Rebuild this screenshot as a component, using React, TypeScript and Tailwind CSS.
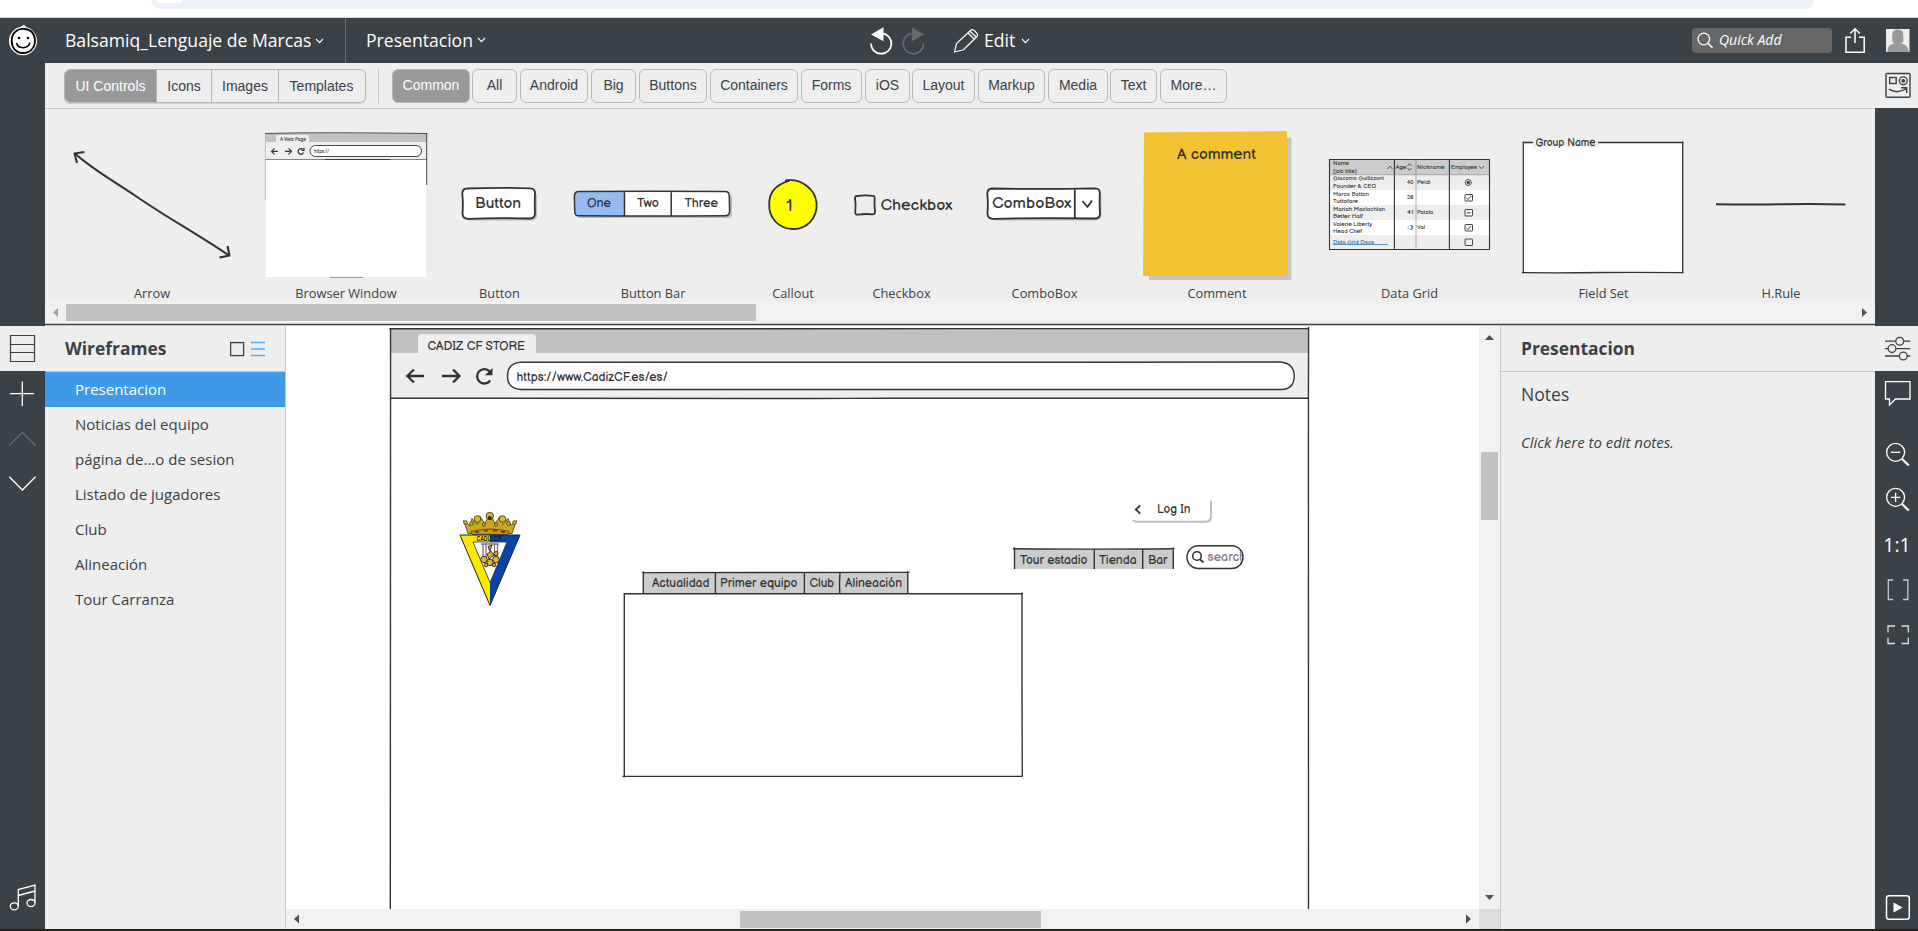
import React from "react";

const INK = "#333333";

function Icon({ box, className = "", children, sw = 1.3 }: { box: string; className?: string; children: React.ReactNode; sw?: number }) {
  const [, , w, h] = box.split(" ").map(Number);
  return (
    <svg width={w} height={h} viewBox={box} fill="none" stroke="currentColor" strokeWidth={sw} className={`block shrink-0 ${className}`}>
      {children}
    </svg>
  );
}

function Label({ x, y, w, size, children, fill = INK }: { x: number; y: number; w: number; size: number; children: string; fill?: string }) {
  return (
    <text x={x} y={y} fontSize={size} textLength={w} lengthAdjust="spacingAndGlyphs" fill={fill} stroke="none" fontFamily="'Balsamiq Sans', Inter, sans-serif">
      {children}
    </text>
  );
}

function Chevron({ className = "" }: { className?: string }) {
  return (
    <svg width="9" height="6" viewBox="0 0 9 6" fill="none" stroke="currentColor" strokeWidth="1.1" className={`block ${className}`}>
      <path d="M1 1 L4.5 4.6 L8 1" />
    </svg>
  );
}

/* ---------- top bar ---------- */

function TopBar() {
  return (
    <header className="flex h-[45px] shrink-0 items-center bg-[#3a4147] text-[17.6px] text-white">
      <Icon box="0 18 45 45" className="w-[45px]">
        <ellipse cx="23" cy="41" rx="14" ry="14.3" fill="#fff" stroke="none" />
        <path d="M21 27 l3 -1.5 l2 2" stroke="#fff" />
        <path d="M26 29.4 C18 27 11.600 33 11.700 41 C11.800 48 16 53 23 53 C30 53 35 48 35 40.500 C35 34 31 29 24 29" stroke="#000" strokeWidth="1.800" />
        <circle cx="19" cy="38" r="1.300" fill="#000" stroke="none" />
        <circle cx="28" cy="38" r="1.300" fill="#000" stroke="none" />
        <path d="M16.500 43 C18 49 28 49.500 30 42.500" stroke="#000" strokeWidth="1.500" />
      </Icon>
      <div className="flex h-full w-[301px] items-center border-r border-[#6b6f73] pl-5">
        <span className="w-[244px] whitespace-nowrap">Balsamiq_Lenguaje de Marcas</span>
        <Chevron className="ml-[6px]" />
      </div>
      <div className="flex w-[524px] items-center pl-[20px]">
        <span className="w-[105px]">Presentacion</span>
        <Chevron className="ml-[6px]" />
      </div>
      <Icon box="870 18 60 45" sw={1.8}>
        <path d="M871 43.500 A10.200 10.200 0 1 0 883 33.500" />
        <path d="M871 34.500 L883.500 27.200 V41.200 Z" fill="currentColor" stroke="none" />
        <g className="text-[#666a6d]" stroke="currentColor">
          <path d="M923.500 43.500 A10.200 10.200 0 1 1 911.500 33.500" />
          <path d="M924 34.500 L911.800 27.200 V41.200 Z" fill="currentColor" stroke="none" />
        </g>
      </Icon>
      <Icon box="930 18 55 45" sw={1.2}>
        <path d="M954.600 52 L956.500 43.500 L970.500 30.500 Q972 29 974 30.200 L977 33.500 Q978.300 35 977 36.500 L963.500 49.800 Z M968 33 L974.500 39.200 M970 31.200 L976.500 37.200" />
      </Icon>
      <span className="-ml-px w-[32px]">Edit</span>
      <Chevron className="ml-[5px]" />
      <div className="ml-auto flex h-[25px] w-[140px] items-center rounded-[4px] bg-[#666666] pl-[4px]">
        <Icon box="1696 28 23 25">
          <circle cx="1703.800" cy="39" r="5.800" />
          <path d="M1708 43.300 L1712.500 47.800" strokeWidth="1.600" />
        </Icon>
        <span className="-mt-[2px] text-[14px] italic">Quick Add</span>
      </div>
      <Icon box="1832 18 43 45" sw={1.5}>
        <path d="M1851 37.200 H1846 V52.300 H1864.200 V37.200 H1859 M1855 43 V29 M1850.300 33.500 L1855 28.800 L1859.700 33.500" />
      </Icon>
      <Icon box="1875 18 43 45">
        <rect x="1886" y="29" width="23.500" height="23" fill="#eeeeee" stroke="none" />
        <path d="M1887.500 52 C1887.500 46 1890 44.500 1895.500 43 C1892 43 1892 41.500 1892.300 38 C1892 32 1893 29.500 1897.700 29.500 C1903 29.500 1903.500 33 1903.300 38 C1903.800 41.500 1903.500 43 1900 43 C1905.500 44.500 1908.500 46 1908.500 52 Z" fill="#999" stroke="none" />
      </Icon>
    </header>
  );
}

/* ---------- control library ---------- */

const CATEGORIES: [string, string][] = [
  ["Common", "w-[78px] mr-[2px] bg-[#999999] text-white"],
  ["All", "w-[45px] mr-[3px]"],
  ["Android", "w-[68px] mr-[3px]"],
  ["Big", "w-[45px] mr-[3px]"],
  ["Buttons", "w-[68px] mr-[3px]"],
  ["Containers", "w-[88px] mr-[3px]"],
  ["Forms", "w-[61px] mr-[3px]"],
  ["iOS", "w-[45px] mr-[2px]"],
  ["Layout", "w-[63px] mr-[3px]"],
  ["Markup", "w-[67px] mr-[3px]"],
  ["Media", "w-[60px] mr-[2px]"],
  ["Text", "w-[47px] mr-[3px]"],
  ["More…", "w-[67px]"],
];

function LibraryBar() {
  return (
    <div className="flex h-[46px] items-start border-b border-[#c6c6c6] pl-[19px] pt-[6px] font-['Liberation_Sans',Arial,sans-serif] text-[14px] text-[#3a4147]">
      <div className="flex h-[34px] w-[302px] overflow-hidden rounded-[6px] border border-[#b5b5b5] text-center leading-[32px] shadow-[0_1px_1px_#d0d0d0]">
        <span className="w-[91px] bg-[#999999] text-white">UI Controls</span>
        <span className="w-[55px] border-l border-[#b5b5b5]">Icons</span>
        <span className="w-[67px] border-l border-[#b5b5b5]">Images</span>
        <span className="grow border-l border-[#b5b5b5] pr-px">Templates</span>
      </div>
      <div className="ml-[12px] mr-[13px] h-[34px] w-px bg-[#c6c6c6]" />
      {CATEGORIES.map(([name, cls]) => (
        <span key={name} className={`h-[34px] shrink-0 rounded-[6px] border border-[#b8b8b8] text-center leading-[31px] ${cls}`}>
          {name}
        </span>
      ))}
    </div>
  );
}

function Thumb({ box, children }: { box: string; children: React.ReactNode }) {
  const [, , w, h] = box.split(" ").map(Number);
  return (
    <svg width={w} height={h} viewBox={box} fill="none" stroke={INK} strokeWidth="1.800" strokeLinejoin="round" className="block">
      {children}
    </svg>
  );
}

const ROWS: { y: number; a: string; b: string; aw: number; bw: number; age: string; nick: string }[] = [
  { y: 174.5, a: "Giacomo Guilizzoni", b: "Founder & CEO", aw: 51, bw: 43, age: "40", nick: "Peldi" },
  { y: 190, a: "Marco Botton", b: "Tuttofare", aw: 36, bw: 25, age: "38", nick: "" },
  { y: 205, a: "Mariah Maclachlan", b: "Better Half", aw: 52, bw: 30, age: "41", nick: "Patata" },
  { y: 220, a: "Valerie Liberty", b: "Head Chef", aw: 39, bw: 29, age: ":)", nick: "Val" },
];

const CONTROLS: { name: string; width: string; art: React.ReactNode }[] = [
  {
    name: "Arrow",
    width: "w-[214px]",
    art: (
      <Thumb box="45 109 214 173">
        <path d="M75 153.500 C92 169 112 180 135 195.500 C165 216.500 196 233 229 255.500" strokeWidth="2.100" />
        <path d="M84.500 152 L74.500 153.500 L77 163 M227.500 246 L229.500 255.500 L219.500 257.500" strokeWidth="2.100" />
      </Thumb>
    ),
  },
  {
    name: "Browser Window",
    width: "w-[174px]",
    art: (
      <Thumb box="259 109 174 173">
        <rect x="265.500" y="133" width="161.500" height="144" fill="#fff" stroke="none" />
        <rect x="265.500" y="133" width="161.500" height="9.500" fill="#c1c1c1" stroke="none" />
        <path d="M265.500 142.300 H427 V159 H265.500 Z M276 143 V137 Q276 135 278 135 H307 Q309 135 309 137 V143 Z" fill="#eee" stroke="none" />
        <path d="M265 133.500 Q300 132.500 340 132.700 T427.500 133.500" strokeWidth="0.800" />
        <path d="M265.500 159.500 H427" strokeWidth="0.600" />
        <path d="M325 159.500 H390 M426.700 134 V185" strokeWidth="0.900" />
        <path d="M330 277.400 H363" strokeWidth="0.500" />
        <path d="M265.400 134 V200" stroke="#aaa" strokeWidth="0.700" />
        <path d="M265.400 200 V277 M427 185 V277" stroke="#ddd" strokeWidth="0.600" />
        <rect x="310" y="145.500" width="111.500" height="11" rx="5.500" fill="#fff" strokeWidth="0.900" />
        <path d="M278 151.300 H271.500 M274.500 148.300 L271.500 151.300 L274.500 154.300 M285 151.300 H291.500 M288.500 148.300 L291.500 151.300 L288.500 154.300" strokeWidth="1.200" />
        <path d="M303 149.500 A2.800 2.800 0 1 0 303.500 152.500 M304 147.800 V150.500 H301.500" strokeWidth="1.200" />
        <Label x={280} y={141.300} w={26} size={5.500}>A Web Page</Label>
        <Label x={314} y={153.300} w={15} size={5.500}>https://</Label>
      </Thumb>
    ),
  },
  {
    name: "Button",
    width: "w-[133px]",
    art: (
      <Thumb box="433 109 133 173">
        <rect x="465" y="191.500" width="72" height="29" rx="5" fill="#bbb" stroke="none" />
        <path d="M467 188.500 Q500 187.500 530 188.300 Q535 188.500 535 193 Q534.500 204 535 213 Q535 218.500 530 218.500 Q500 217.500 468 218.800 Q462.500 218.800 462.500 213 Q463.300 203 462.300 194 Q462.300 188.500 467 188.500 Z" fill="#fff" />
        <Label x={475} y={207.500} w={46} size={15}>Button</Label>
      </Thumb>
    ),
  },
  {
    name: "Button Bar",
    width: "w-[174px]",
    art: (
      <Thumb box="566 109 174 173">
        <rect x="577" y="194.500" width="155" height="23.500" rx="4" fill="#bbb" stroke="none" />
        <rect x="574.500" y="191.500" width="155" height="24.500" rx="5" fill="#fff" stroke="none" />
        <path d="M624.500 191.500 H579 Q574.500 191.500 574.500 196 V211 Q574.500 216 579 216 H624.500 Z" fill="#94bbf2" stroke="none" />
        <path d="M579 191.500 Q650 190.800 725 191.500 Q729.500 191.500 729.300 196 L729.600 211 Q729.500 215.800 725 215.800 Q650 216.400 579 215.800 Q574.500 216 574.700 211 L574.400 196 Q574.500 191.500 579 191.500 Z M624.500 191.500 V216 M671.200 191.500 V216" strokeWidth="1.500" />
        <Label x={587} y={207} w={24} size={12}>One</Label>
        <Label x={637} y={207} w={22} size={12}>Two</Label>
        <Label x={684.500} y={207} w={33.500} size={12}>Three</Label>
      </Thumb>
    ),
  },
  {
    name: "Callout",
    width: "w-[106px]",
    art: (
      <Thumb box="740 109 106 173">
        <path d="M786 180.500 C800 178 815 188 816.600 203 C817.500 219 806 229.500 793 229 C779 229 768.500 218 769.200 204 C769 191 778 184 789 180.800" fill="#ffff00" />
        <path d="M785 181.200 L789 180.500" strokeWidth="2.200" />
        <Label x={786} y={211} w={6.500} size={16}>1</Label>
      </Thumb>
    ),
  },
  {
    name: "Checkbox",
    width: "w-[111px]",
    art: (
      <Thumb box="846 109 111 173">
        <path d="M857 196 Q865 195 873 195.800 Q875 196 874.600 199 Q874.200 205 875 212 Q875 214.500 872 214.300 Q865 213.500 858 214.700 Q855 214.700 855.300 212 Q856 204 855 198 Q855 196 857 196 Z" />
        <Label x={880.500} y={210} w={72} size={15}>Checkbox</Label>
      </Thumb>
    ),
  },
  {
    name: "ComboBox",
    width: "w-[175px]",
    art: (
      <Thumb box="957 109 175 173">
        <rect x="990" y="191.500" width="111.500" height="29" rx="5" fill="#bbb" stroke="none" />
        <path d="M992 188.500 Q1045 189.500 1095 188.300 Q1100 188.500 1099.800 193 Q1099.300 204 1100 213 Q1100 218.500 1095 218.500 Q1045 217.500 993 218.800 Q987.500 218.800 987.500 213 Q988.300 203 987.300 194 Q987.300 188.500 992 188.500 Z M1074.800 189 V218.500" fill="#fff" />
        <path d="M1082.500 201 L1087.500 207 L1092 200.500" />
        <Label x={992} y={207.500} w={79.500} size={15}>ComboBox</Label>
      </Thumb>
    ),
  },
  {
    name: "Comment",
    width: "w-[170px]",
    art: (
      <Thumb box="1132 109 170 173">
        <rect x="1149" y="137.500" width="142.500" height="142.500" fill="#c4c4c4" stroke="none" />
        <path d="M1144 132.500 L1287 131 L1287.200 276 L1143 276 Z" fill="#f1c232" stroke="none" />
        <Label x={1177} y={158.700} w={79} size={14.500}>A comment</Label>
      </Thumb>
    ),
  },
  {
    name: "Data Grid",
    width: "w-[215px]",
    art: (
      <Thumb box="1302 109 215 173">
        <rect x="1329.500" y="159.500" width="160" height="90" fill="#fff" stroke="none" />
        <path d="M1329.500 159.500 H1489.500 V174.500 H1329.500 Z" fill="#ccc" stroke="none" />
        <path d="M1329.500 175 H1489.500 V190 H1329.500 Z M1329.500 205 H1489.500 V220 H1329.500 Z M1329.500 235 H1489.500 V249.500 H1329.500 Z" fill="#eee" stroke="none" />
        <path d="M1329.500 159.500 H1489.500 V249.500 H1329.500 Z M1394.400 159.500 V249.500 M1449.400 159.500 V249.500" strokeWidth="1.100" />
        <path d="M1416 159.500 V249.500 M1329.500 174.700 H1489.500" stroke="#777" strokeWidth="0.600" />
        <path d="M1387.500 169 L1390 166 L1392.500 169 M1479 166 L1481.500 168.800 L1484 166 M1407.500 166 L1409.500 163.500 L1411.500 166 M1407.500 168 L1409.500 170.500 L1411.500 168" strokeWidth="0.800" />
        <Label x={1333} y={165} w={16} size={5.800}>Name</Label>
        <Label x={1333} y={172.500} w={24} size={5.800}>(job title)</Label>
        <Label x={1395.500} y={169} w={11} size={5.800}>Age</Label>
        <Label x={1417} y={169} w={27.500} size={5.800}>Nickname</Label>
        <Label x={1451} y={169} w={26} size={5.800}>Employee</Label>
        {ROWS.map((r) => (
          <g key={r.a}>
            <Label x={1333} y={r.y + 5.500} w={r.aw} size={5.800}>{r.a}</Label>
            <Label x={1333} y={r.y + 13} w={r.bw} size={5.800}>{r.b}</Label>
            <Label x={1407} y={r.y + 9} w={6.500} size={5.800}>{r.age}</Label>
            {r.nick && <Label x={1417} y={r.y + 9} w={r.nick.length * 2.700} size={5.800}>{r.nick}</Label>}
          </g>
        ))}
        <Label x={1333} y={243.500} w={41} size={5.800} fill="#1a6aae">Data Grid Docs</Label>
        <path d="M1333 244.500 H1388" stroke="#1a6aae" strokeWidth="0.700" />
        <g strokeWidth="0.900">
          <circle cx="1468.300" cy="182.500" r="3" />
          <circle cx="1468.300" cy="182.500" r="1.200" fill={INK} />
          <rect x="1465" y="194.500" width="7.500" height="6.500" rx="0.500" />
          <rect x="1465" y="209.500" width="7.500" height="6.500" rx="0.500" />
          <rect x="1465" y="224.500" width="7.500" height="6.500" rx="0.500" />
          <rect x="1465" y="239" width="7.500" height="6.500" rx="0.500" />
          <path d="M1466.500 198 L1468 199.500 L1471 196 M1467 212.800 H1470.500 M1466.500 228 L1468 229.500 L1471 226" />
        </g>
      </Thumb>
    ),
  },
  {
    name: "Field Set",
    width: "w-[173px]",
    art: (
      <Thumb box="1517 109 173 173">
        <rect x="1523.500" y="142.500" width="159.500" height="130" fill="#fff" stroke="none" />
        <path d="M1523.500 142.500 H1683.500 M1523.300 141.500 V273.500 M1682.700 141.500 V273.500 M1522 272.600 Q1560 273 1600 272.500 T1683.500 272.700" strokeWidth="1.300" />
        <rect x="1533" y="136" width="65" height="11.500" fill="#eee" stroke="none" />
        <Label x={1535.500} y={145.500} w={60} size={10.500}>Group Name</Label>
      </Thumb>
    ),
  },
  {
    name: "H.Rule",
    width: "w-[182px]",
    art: (
      <Thumb box="1690 109 182 173">
        <path d="M1716 204.300 Q1755 204.900 1785 204.200 T1845.500 204.500" strokeWidth="2" />
      </Thumb>
    ),
  },
];

function Library() {
  return (
    <section className="w-[1830px] shrink-0 bg-[#eeeeee]">
      <LibraryBar />
      <div className="flex h-[193px]">
        {CONTROLS.map((c) => (
          <figure key={c.name} className={`shrink-0 ${c.width}`}>
            {c.art}
            <figcaption className="h-5 text-center text-[12.8px] leading-[23px] text-[#3a4147]">{c.name}</figcaption>
          </figure>
        ))}
      </div>
      <div className="flex h-[21px] items-center bg-[#f1f1f1]">
        <Icon box="45 302 21 21">
          <path d="M58 308 V317 L53 312.500 Z" fill="#a3a3a3" stroke="none" />
        </Icon>
        <div className="h-[17px] w-[690px] bg-[#c1c1c1]" />
        <Icon box="1854 302 21 21" className="ml-auto">
          <path d="M1862 308 V317 L1867 312.500 Z" fill="#505050" stroke="none" />
        </Icon>
      </div>
      <div className="h-[3px] border-y border-[#c6c6c6] bg-[#3a4147]" />
    </section>
  );
}

/* ---------- navigator ---------- */

const PAGES = ["Presentacion", "Noticias del equipo", "página de...o de sesion", "Listado de jugadores", "Club", "Alineación", "Tour Carranza"];

function LeftRail() {
  return (
    <nav className="flex w-[45px] flex-col bg-[#3a4147] text-white">
      <Icon box="0 326 45 45" className="bg-[#eeeeee] text-[#3a4147]" sw={1.2}>
        <path d="M10.500 335.500 H34.500 V361.500 H10.500 Z M10.500 344.500 H34.500 M10.500 352.500 H34.500" />
      </Icon>
      <Icon box="0 371 45 45">
        <path d="M10 393.600 H34 M22.300 381.500 V406" />
      </Icon>
      <Icon box="0 416 45 45" className="text-[#6b6f72]">
        <path d="M9.300 445.500 L22.400 432.300 L35.500 445.500" />
      </Icon>
      <Icon box="0 461 45 45">
        <path d="M9.300 476.800 L22.400 490 L35.500 476.800" />
      </Icon>
      <Icon box="0 877 45 45" className="mb-[7px] mt-auto">
        <path d="M18.300 906 V889.500 L35 885 V902.500 M18.300 895.500 L35 891" />
        <ellipse cx="14.300" cy="906.300" rx="4" ry="3.500" />
        <ellipse cx="31" cy="903" rx="4" ry="3.500" />
      </Icon>
    </nav>
  );
}

function Navigator() {
  return (
    <aside className="w-[241px] shrink-0 border-r border-[#c6c6c6] bg-[#eeeeee] text-[#3a4147]">
      <div className="flex h-[46px] items-center border-b border-[#c6c6c6] pl-5">
        <h2 className="w-[165px] text-[17.400px] font-bold">Wireframes</h2>
        <Icon box="230 326 21 45">
          <rect x="230.600" y="342.600" width="13" height="13" />
        </Icon>
        <Icon box="251 326 15 45" className="text-[#58a9ef]">
          <path d="M251 342.500 H265 M251 349 H265 M251 355.500 H265" />
        </Icon>
      </div>
      <ul className="text-[15px]">
        {PAGES.map((p, i) => (
          <li key={p} className={`h-[35px] pl-[30px] leading-[35px] ${i === 0 ? "bg-[#3e9ae8] text-white" : ""}`}>
            {p}
          </li>
        ))}
      </ul>
    </aside>
  );
}

/* ---------- canvas ---------- */

function Crest() {
  return (
    <svg width="62" height="96" viewBox="459 511.500 62 96" className="absolute left-[173px] top-[185px]">
      <path d="M468 534 L463.500 521 L469.500 526 L472 519 L477 525 L480 517 L485 524 L489.800 514 L495 524 L500 517 L503.500 525 L508 519 L511 526 L516.500 521 L512 534 Z" fill="#c9a81f" stroke="#5b4a10" strokeWidth="0.900" />
      <g fill="#d9b929" stroke="#4d3f0f" strokeWidth="0.900">
        <circle cx="489.800" cy="516.500" r="3.700" />
        <circle cx="477.500" cy="519.500" r="3.300" />
        <circle cx="502.500" cy="519.500" r="3.300" />
        <circle cx="465.500" cy="523" r="1.800" />
        <circle cx="514.500" cy="523" r="1.800" />
        <circle cx="471.500" cy="524" r="1.800" />
        <circle cx="508.500" cy="524" r="1.800" />
        <circle cx="484" cy="525" r="1.600" />
        <circle cx="496" cy="525" r="1.600" />
      </g>
      <circle cx="489.800" cy="518.500" r="2" fill="#222" />
      <path d="M471 532 Q490 527 509 532 L508 535 H472 Z" fill="#b99a1c" stroke="#4d3f0f" strokeWidth="0.800" />
      <path d="M475 532.500 h4 M484 531 h4 M493 531 h4 M501 532.500 h4" stroke="#b3202c" strokeWidth="2" />
      <path d="M460 535.500 H490 V606 Z" fill="#ffe800" />
      <path d="M520 535.500 H490 V606 Z" fill="#0645a8" />
      <path d="M460 535.500 H520 L490 606 Z" fill="none" stroke="#222" strokeWidth="1" />
      <path d="M473 542.500 H507 L490 583 Z" fill="#fff" stroke="#333" strokeWidth="0.800" />
      <path d="M483 545 V560 M486 545 V560 M494.500 545 V560 M497.500 545 V560 M481 544.500 H499" stroke="#777" strokeWidth="1.300" />
      <path d="M488 547 l4 -1.500 l-2 5 l4 5 l-5 4 l-2 -5 l3 -2 Z" fill="#e3a62b" stroke="#222" strokeWidth="0.900" />
      <g fill="#dcb92a" stroke="#222" strokeWidth="0.900">
        <circle cx="484" cy="560" r="3.300" />
        <circle cx="496" cy="560" r="3.300" />
        <circle cx="490" cy="563" r="3.200" />
        <circle cx="486" cy="565.500" r="1.800" />
        <circle cx="494" cy="565.500" r="1.800" />
        <circle cx="496" cy="554" r="2" />
      </g>
      <text x="476.500" y="541.800" fontSize="6.500" fontWeight="700" textLength="26" lengthAdjust="spacingAndGlyphs" fill="#111" fontFamily="'Liberation Sans', sans-serif">CADIZ C.F.</text>
    </svg>
  );
}

function Canvas() {
  return (
    <main className="flex w-[1214px] shrink-0 flex-col bg-white">
      <div className="flex h-[583px]">
        <div className="relative w-[1193px] overflow-hidden">
          <svg width="1193" height="583" viewBox="286 326 1193 583" fill="none" stroke={INK} strokeWidth="1.400" className="block">
            <rect x="391" y="329" width="917.500" height="24.200" fill="#c1c1c1" stroke="none" />
            <path d="M391 353 H1308 V398.500 H391 Z M418 354 V338 Q418 334 422 334 H532 Q536 334 536 338 V354 Z" fill="#eeeeee" stroke="none" />
            <path d="M389.500 328.800 C500 328.300 560 329.300 700 328.800 S950 329.600 1309 328.600" />
            <path d="M390.500 328 C390.900 480 389.700 620 390.300 909 M1308.600 327 C1308 480 1308.900 600 1308.500 909" />
            <path d="M390.500 398.200 C600 397.800 720 399 850 398.400 S1100 398.900 1308 398.300" />
            <path d="M521 362.300 C620 361.800 760 362.800 900 362.300 S1140 362.600 1280 362 Q1294 363 1294.300 376 Q1294 389.500 1281 389.500 C1100 389 900 389.800 521 389.500 Q507.500 389 507.500 376 Q507.500 363 521 362.300 Z" fill="#fff" />
            <path d="M424 376 H407.500 M414 369.500 L407.300 376 L414 382.500 M442 376 H459 M453 369.500 L459.500 376 L453 382.500 M490.200 380.500 A7.200 7.200 0 1 1 489.700 371.500" strokeWidth="2.300" />
            <path d="M492.500 368 V375.300 H485 Z" fill={INK} stroke="none" />

            <path d="M643.500 572.500 H908 V594 H643.500 Z" fill="#ccc" stroke="none" />
            <path d="M642 572.600 C700 573 780 572.300 909.500 572.400 M643.300 571.500 V594 M715.400 572.500 V594 M804.400 572.500 V594 M840 572.500 Q839.200 584 839.800 594 M907.800 571 V594" />
            <path d="M624 593.800 C720 594.500 820 593.600 1023 593.800 M624.300 593 C624.700 680 624.200 720 624.300 777.500 M1022 592.500 C1021.600 660 1022.300 710 1022.300 776.500 M622.500 776.400 C700 776 820 776.400 1022.500 776.400" />

            <path d="M1014.300 549 H1173.300 V569 H1014.300 Z" fill="#ccc" stroke="none" />
            <path d="M1013 548.700 Q1080 549.500 1174.500 548.800 M1014.500 547.500 V569 M1094.300 549 V569 M1142.700 549 V569 M1173.300 547.500 V569" />

            <path d="M1132 519.500 Q1133 522.700 1137 522.700 H1206 Q1212 522.700 1212 517 V502 Q1212 500 1210 500 V516 Q1210 520.700 1205 520.700 H1137 Z" fill="#bdbdbd" stroke="none" />
            <path d="M1140.300 505.300 L1135.800 509.500 L1140.300 513.700" strokeWidth="1.800" />

            <rect x="1187" y="545.800" width="56" height="22.700" rx="11.300" />
            <circle cx="1197" cy="556" r="4.300" strokeWidth="1.600" />
            <path d="M1200 559.300 L1203.500 562.500" strokeWidth="1.800" />

            <Label x={427.500} y={350} w={97.500} size={12}>CADIZ CF STORE</Label>
            <Label x={516.500} y={380.700} w={151.500} size={12}>https://www.CadizCF.es/es/</Label>
            <Label x={652} y={587.300} w={57.500} size={12}>Actualidad</Label>
            <Label x={720} y={587.300} w={77.500} size={12}>Primer equipo</Label>
            <Label x={809.500} y={587.300} w={24.500} size={12}>Club</Label>
            <Label x={845} y={587.300} w={57} size={12}>Alineación</Label>
            <Label x={1157} y={513} w={33.500} size={12}>Log In</Label>
            <Label x={1020} y={564} w={67.500} size={12}>Tour estadio</Label>
            <Label x={1099} y={564} w={37.500} size={12}>Tienda</Label>
            <Label x={1148} y={564} w={19.500} size={12}>Bar</Label>
            <clipPath id="field">
              <rect x="1204" y="546" width="37.800" height="22" />
            </clipPath>
            <g clipPath="url(#field)">
              <Label x={1207.500} y={561} w={38.500} size={12} fill="#808080">search</Label>
            </g>
          </svg>
          <Crest />
        </div>
        <div className="flex w-[21px] flex-col items-center bg-[#f1f1f1]">
          <Icon box="1479 326 21 126">
            <path d="M1485 340 H1494 L1489.500 335 Z" fill="#505050" stroke="none" />
          </Icon>
          <div className="h-[68px] w-[17px] bg-[#c1c1c1]" />
          <Icon box="1479 888 21 21" className="mt-auto">
            <path d="M1485 895 H1494 L1489.500 900 Z" fill="#505050" stroke="none" />
          </Icon>
        </div>
      </div>
      <div className="flex h-5 items-center bg-[#f1f1f1]">
        <Icon box="286 909 454 20">
          <path d="M299 914.500 V923.500 L294 919 Z" fill="#505050" stroke="none" />
        </Icon>
        <div className="h-[17px] w-[301px] bg-[#c1c1c1]" />
        <Icon box="1458 909 21 20" className="ml-auto">
          <path d="M1466 914.500 V923.500 L1471 919 Z" fill="#505050" stroke="none" />
        </Icon>
        <div className="h-5 w-[21px] bg-[#dcdcdc]" />
      </div>
    </main>
  );
}

/* ---------- inspector ---------- */

function Inspector() {
  return (
    <aside className="w-[375px] shrink-0 border-l border-[#c6c6c6] bg-[#eeeeee] text-[#3a4147]">
      <h2 className="flex h-[46px] items-center border-b border-[#c6c6c6] pl-5 text-[17.400px] font-bold">Presentacion</h2>
      <h3 className="pl-5 pt-[9px] text-[17.600px] leading-[26px]">Notes</h3>
      <p className="pl-5 pt-[22px] text-[15px] italic leading-[26px] tracking-[-0.03px]">Click here to edit notes.</p>
    </aside>
  );
}

function RightRail() {
  return (
    <nav className="flex w-[43px] shrink-0 flex-col bg-[#3a4147] text-white">
      <Icon box="1875 326 43 45" className="bg-[#eeeeee] text-[#3a4147]">
        <path d="M1885 341.200 H1896 M1903.500 341.200 H1910.300 M1885 348.600 H1888 M1896 348.600 H1910.300 M1885 356 H1899.500 M1907 356 H1910.300" />
        <circle cx="1899.700" cy="341.200" r="3.900" />
        <circle cx="1892" cy="348.600" r="3.900" />
        <circle cx="1903.300" cy="356" r="3.900" />
      </Icon>
      <Icon box="1875 371 43 61">
        <path d="M1885.500 381.600 H1910 V399 H1895.500 L1889.500 405 V399 H1885.500 Z" />
      </Icon>
      <Icon box="1875 432 43 45">
        <circle cx="1895.600" cy="452.300" r="9" />
        <path d="M1891 452.300 H1900.300" />
        <path d="M1902 459 L1908.800 465.500" strokeWidth="2.400" />
      </Icon>
      <Icon box="1875 477 43 45">
        <circle cx="1895.600" cy="497.300" r="9" />
        <path d="M1891 497.300 H1900.300 M1895.600 492.700 V502" />
        <path d="M1902 504 L1908.800 510.500" strokeWidth="2.400" />
      </Icon>
      <span className="h-[45px] pl-px text-center text-[19.500px] leading-[45px]">1:1</span>
      <Icon box="1875 567 43 45" className="text-[#c9cbcd]">
        <path d="M1893 580 H1888.300 V599.500 H1893 M1903 580 H1907.800 V599.500 H1903" />
      </Icon>
      <Icon box="1875 612 43 45" className="text-[#dddfe0]">
        <path d="M1895 626 H1888 V632.500 M1901.500 626 H1908.300 V632.500 M1888 637.500 V643.500 H1895 M1908.300 637.500 V643.500 H1901.500" />
      </Icon>
      <Icon box="1875 885 43 44" className="mt-auto" sw={1.5}>
        <rect x="1886.500" y="895.700" width="22.800" height="23.600" rx="2.500" />
        <path d="M1893.500 902.500 V912.500 L1902.500 907.500 Z" fill="currentColor" stroke="none" />
      </Icon>
    </nav>
  );
}

export default function App() {
  return (
    <div className="flex h-[931px] w-[1918px] flex-col overflow-hidden bg-white font-['Open_Sans','Noto_Sans',sans-serif]">
      <div className="flex h-[18px] shrink-0 items-start border-b border-[#d5d5d5] pl-[151px]">
        <div className="h-[9px] w-[1663px] overflow-hidden rounded-b-[17px] bg-[#ecf0f9] pl-[6px]">
          <div className="h-[3px] w-[26px] rounded-b-[13px] bg-white" />
        </div>
      </div>
      <TopBar />
      <div className="flex h-[263px] shrink-0">
        <div className="w-[45px] bg-[#3a4147]" />
        <Library />
        <div className="flex w-[43px] flex-col bg-[#3a4147]">
          <Icon box="1875 63 43 45" className="bg-[#eeeeee] text-[#3a4147]" sw={1.4}>
            <rect x="1886" y="73.500" width="24" height="23.800" rx="1" />
            <rect x="1889.700" y="77.500" width="6.500" height="6" />
            <circle cx="1903.300" cy="80.800" r="3.900" />
            <circle cx="1903.300" cy="80.800" r="1.200" fill="currentColor" />
            <path d="M1889 89.200 Q1897.500 94.500 1906.500 88.500 M1901 87.700 H1906.700 V93" />
          </Icon>
        </div>
      </div>
      <div className="flex h-[603px] shrink-0">
        <LeftRail />
        <Navigator />
        <Canvas />
        <Inspector />
        <RightRail />
      </div>
      <div className="h-[2px] bg-[#23241c]" />
    </div>
  );
}
